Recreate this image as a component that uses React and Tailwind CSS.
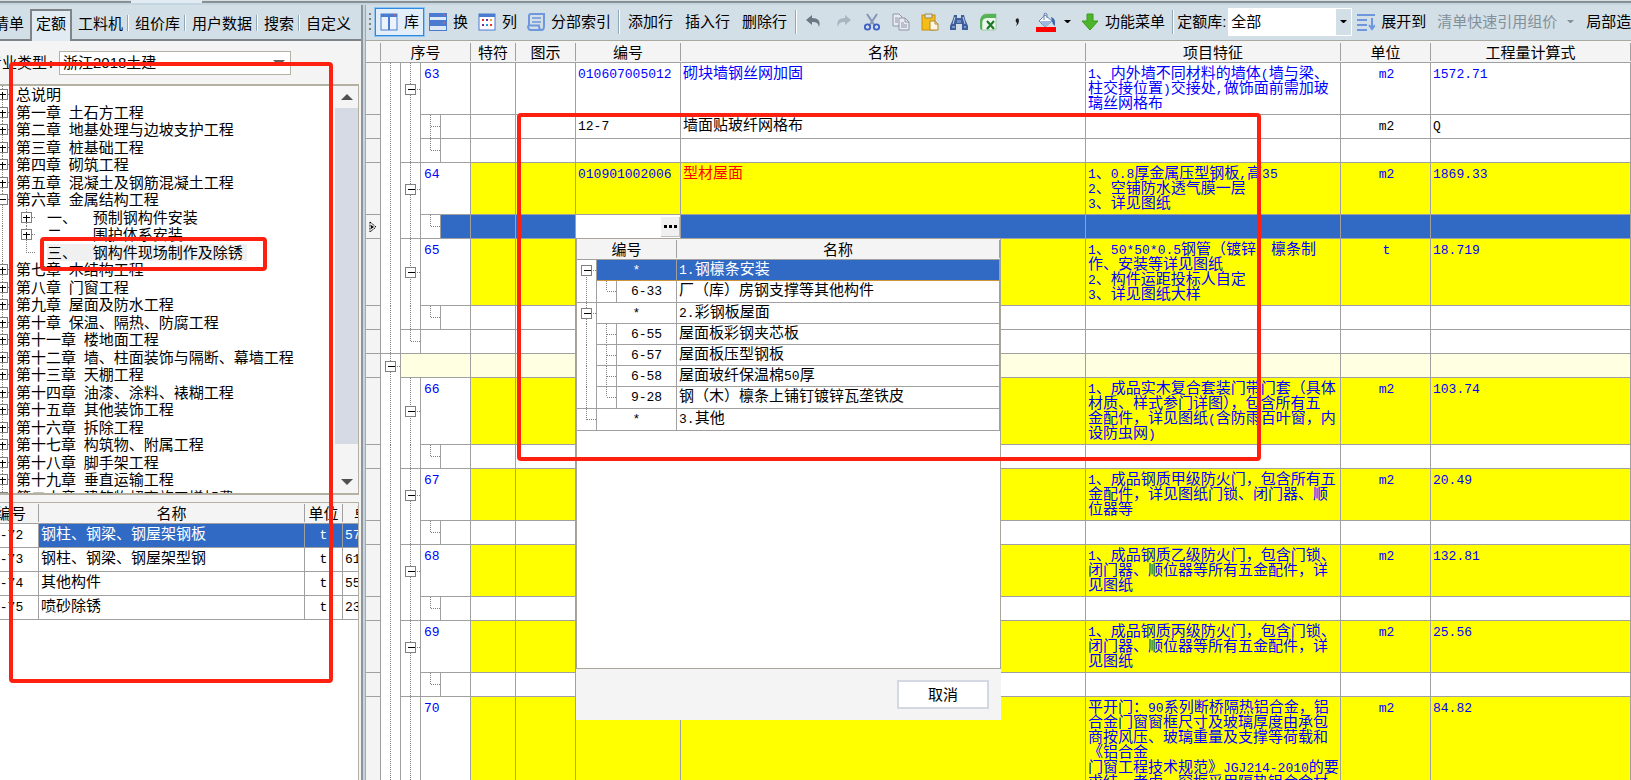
import React, { useState } from "react";
import clsx from "clsx";

const tabs = ["清单", "定额", "工料机", "组价库", "用户数据", "搜索", "自定义"];

const chapters = [
  { text: "总说明" },
  { text: "第一章 土石方工程" },
  { text: "第二章 地基处理与边坡支护工程" },
  { text: "第三章 桩基础工程" },
  { text: "第四章 砌筑工程" },
  { text: "第五章 混凝土及钢筋混凝土工程" },
  { text: "第六章 金属结构工程", open: true },
  { text: "一、  预制钢构件安装", sub: true },
  { text: "二、  围护体系安装", sub: true },
  { text: "三、  钢构件现场制作及除锈", sub: true, leaf: true },
  { text: "第七章 木结构工程" },
  { text: "第八章 门窗工程" },
  { text: "第九章 屋面及防水工程" },
  { text: "第十章 保温、隔热、防腐工程" },
  { text: "第十一章 楼地面工程" },
  { text: "第十二章 墙、柱面装饰与隔断、幕墙工程" },
  { text: "第十三章 天棚工程" },
  { text: "第十四章 油漆、涂料、裱糊工程" },
  { text: "第十五章 其他装饰工程" },
  { text: "第十六章 拆除工程" },
  { text: "第十七章 构筑物、附属工程" },
  { text: "第十八章 脚手架工程" },
  { text: "第十九章 垂直运输工程" },
  { text: "第二十章 建筑物超高施工增加费" },
];

const quotas = [
  { code: "6-72", name: "钢柱、钢梁、钢屋架钢板", unit: "t", price: "57" },
  { code: "6-73", name: "钢柱、钢梁、钢屋架型钢", unit: "t", price: "61" },
  { code: "6-74", name: "其他构件", unit: "t", price: "55" },
  { code: "6-75", name: "喷砂除锈", unit: "t", price: "23" },
];

const rows = [
  { kind: "item", no: "63", size: "md", code: "010607005012", name: "砌块墙钢丝网加固", unit: "m2", qty: "1572.71", plain: true,
    feature: ["1、内外墙不同材料的墙体(墙与梁、", "柱交接位置)交接处,做饰面前需加玻", "璃丝网格布"] },
  { kind: "child", code: "12-7", name: "墙面贴玻纤网格布", unit: "m2", qty: "Q" },
  { kind: "last" },
  { kind: "item", no: "64", size: "md", code: "010901002006", name: "型材屋面", unit: "m2", qty: "1869.33", alert: true,
    feature: ["1、0.8厚金属压型钢板,高35", "2、空铺防水透气膜一层", "3、详见图纸"] },
  { kind: "last", editing: true },
  { kind: "item", no: "65", size: "lg", unit: "t", qty: "18.719",
    feature: ["1、50*50*0.5钢管（镀锌）檩条制", "作、安装等详见图纸", "2、构件运距投标人自定", "3、详见图纸大样"] },
  { kind: "last" },
  { kind: "tail" },
  { kind: "group" },
  { kind: "item", no: "66", size: "lg", unit: "m2", qty: "103.74",
    feature: ["1、成品实木复合套装门带门套（具体", "材质、样式参门详图），包含所有五", "金配件，详见图纸(含防雨百叶窗，内", "设防虫网)"] },
  { kind: "last" },
  { kind: "item", no: "67", size: "md", unit: "m2", qty: "20.49",
    feature: ["1、成品钢质甲级防火门，包含所有五", "金配件，详见图纸门锁、闭门器、顺", "位器等"] },
  { kind: "last" },
  { kind: "item", no: "68", size: "md", unit: "m2", qty: "132.81",
    feature: ["1、成品钢质乙级防火门，包含门锁、", "闭门器、顺位器等所有五金配件，详", "见图纸"] },
  { kind: "last" },
  { kind: "item", no: "69", size: "md", unit: "m2", qty: "25.56",
    feature: ["1、成品钢质丙级防火门，包含门锁、", "闭门器、顺位器等所有五金配件，详", "见图纸"] },
  { kind: "last" },
  { kind: "item", no: "70", size: "xl", unit: "m2", qty: "84.82",
    feature: ["平开门：90系列断桥隔热铝合金，铝", "合金门窗窗框尺寸及玻璃厚度由承包", "商按风压、玻璃重量及支撑等荷载和", "《铝合金", "门窗工程技术规范》JGJ214-2010的要", "求结、考虑，窗框采用隔热铝合金材"] },
];

const suggestions = [
  { code: "*", name: "1.钢檩条安装", glyph: "box" },
  { code: "6-33", name: "厂（库）房钢支撑等其他构件", sub: "end" },
  { code: "*", name: "2.彩钢板屋面", glyph: "box" },
  { code: "6-55", name: "屋面板彩钢夹芯板", sub: "tee" },
  { code: "6-57", name: "屋面板压型钢板", sub: "tee" },
  { code: "6-58", name: "屋面玻纤保温棉50厚", sub: "tee" },
  { code: "9-28", name: "钢（木）檩条上铺钉镀锌瓦垄铁皮", sub: "end" },
  { code: "*", name: "3.其他", glyph: "end" },
];

const sizes = {
  sm: "h-[24px]",
  md: "h-[52px]",
  lg: "h-[67px]",
  xl: "h-[184px]",
};

// half-width characters go in the mono face, the rest stays in the CJK one
const Mixed = ({ children }) =>
  children
    .split(/([\x20-\x7e]+)/)
    .filter(Boolean)
    .map((part, i) =>
      /^[\x20-\x7e]/.test(part) ? (
        <span key={i} className="whitespace-pre font-['Liberation_Mono',monospace] text-[13px] leading-none">{part}</span>
      ) : (
        part
      )
    );

// tree connectors: line | tee | end | box, plus sign when closed
const Glyph = ({ type, closed, first }) => (
  <svg className="block h-full w-full" shapeRendering="crispEdges" aria-hidden="true">
    <line x1="50%" x2="50%" y1={first ? "50%" : "0"} y2={type === "end" ? "50%" : "100%"} stroke="#808080" strokeDasharray="1 1" />
    {type !== "line" && <line x1="50%" x2="100%" y1="50%" y2="50%" stroke="#808080" strokeDasharray="1 1" />}
    {type === "box" && (
      <svg x="50%" y="50%" overflow="visible">
        <rect x="-5" y="-5" width="10" height="10" fill="#fff" stroke="#808080" />
        <path d={closed ? "M-3 0H4M0 -3V4" : "M-3 0H4"} stroke="#000" fill="none" />
      </svg>
    )}
  </svg>
);

const Caret = ({ className }) => (
  <svg viewBox="0 0 8 4" className={className} aria-hidden="true">
    <path d="M0 0h8L4 4z" fill="currentColor" />
  </svg>
);

const icons = {
  library: (
    <>
      <rect x="1" y="1" width="16" height="16" fill="#eaf2fb" stroke="#4a7bd0" />
      <path d="M1 1h16v3H1z" fill="#4a7bd0" />
      <path d="M9 3v14" stroke="#4a7bd0" strokeWidth="2" />
      <path d="M5 2h1M14 2h1" stroke="#f06060" />
    </>
  ),
  swap: (
    <>
      <rect x="0" y="0" width="18" height="18" fill="#4a7bd0" />
      <path d="M1 4h16v3H1zM1 13h16v4H1z" fill="#dce9f5" />
      <path d="M14 2h2M14 10h2" stroke="#f06060" />
    </>
  ),
  columns: (
    <>
      <rect x="1" y="1" width="16" height="16" fill="#fff" stroke="#4a7bd0" />
      <path d="M1 1h16v3H1z" fill="#4a7bd0" />
      <path d="M4 6h2v2H4zM12 11h2v2h-2z" fill="#f03030" />
      <path d="M8 6h2v2H8zM4 11h2v2H4z" fill="#7030a0" />
      <path d="M12 6h2v2h-2z" fill="#f0a030" />
      <path d="M8 11h2v2H8z" fill="#20a0d0" />
    </>
  ),
  scroll: (
    <g fill="none" stroke="#6f97dd" strokeWidth="2">
      <path d="M2 13V3q0-2 2-2h13v12" />
      <path d="M1 12.500h11q0 4.500 2.500 4.500t2.500-4M1 12.500q0 4.500 3 4.500h11" />
      <path d="M5 5h9M5 9h9" strokeWidth="1.500" />
    </g>
  ),
  undo: <path d="M7 2L1 7l6 5V9c5 0 6 1 7 5 2-6-1-9-7-9z" fill="#6c7784" />,
  redo: <path d="M11 2l6 5-6 5V9c-5 0-6 1-7 5-2-6 1-9 7-9z" fill="#a9b5bf" />,
  cut: (
    <g fill="none">
      <path d="M4 1l8 12M14 1L6 13" stroke="#8595b5" strokeWidth="2" />
      <circle cx="4.500" cy="14" r="2.700" stroke="#3c5fc8" strokeWidth="1.800" />
      <circle cx="13.500" cy="14" r="2.700" stroke="#3c5fc8" strokeWidth="1.800" />
    </g>
  ),
  copy: (
    <g fill="#e8ebf2" stroke="#9095a8">
      <path d="M1 1h6l3 3v9H1z" />
      <path d="M7 5h6l4 4v8H7z" />
      <path d="M13 5v4h4M9 10h3M9 12h6M9 14h6M3 5h3M3 7h3M3 9h3" fill="none" />
    </g>
  ),
  paste: (
    <>
      <rect x="1" y="2" width="13" height="15" fill="#f5bd18" stroke="#c8900c" />
      <path d="M4 1h7v4H4z" fill="#dfe3e8" stroke="#9a8a50" />
      <path d="M9 8h5l3 3v6H9z" fill="#fdf6dc" stroke="#b08a30" />
      <path d="M14 8v3h3" fill="none" stroke="#b08a30" />
    </>
  ),
  find: (
    <>
      <path d="M4 2h3v3h4V2h3l1 4 3 7v4h-6v-6H6v6H0v-4l3-7z" fill="#3d5f9c" />
      <path d="M5 4l-2 7M13 4l2 7M2 14h3M14 14h2" stroke="#c5d6ee" />
      <path d="M7 7h4v3H7z" fill="#6f8fc4" />
    </>
  ),
  excel: (
    <>
      <path d="M5 1h12v15q0 1-1 1H3V8z" fill="#eef7ee" stroke="#8cc48c" strokeWidth=".8" />
      <path d="M17 1H8Q1 1 1 9v5q0 3 2 3V10q0-5 6-5h8z" fill="#57b157" />
      <path d="M8 8l7 8M15 8l-7 8" stroke="#1d7a2c" strokeWidth="2.200" />
    </>
  ),
  comma: <path d="M8 6q3-2 3 2 0 3-3 5 1-2 1-3-2-1-1-4z" fill="#222" />,
  down: <path d="M6 1h6v7h5l-8 9-8-9h5z" fill="#4db52a" stroke="#3a9a1c" />,
  expand: (
    <g stroke="#6f97dd" strokeWidth="2" fill="none">
      <path d="M0 2h18M0 7h10M0 12h10M0 17h10M15 5v10" />
      <path d="M12 12l3 4 3-4" />
    </g>
  ),
};

const Icon = ({ name }) => (
  <svg viewBox="0 0 18 18" className="h-[18px] w-[18px] shrink-0" aria-hidden="true">
    {icons[name]}
  </svg>
);

const ToolButton = ({ icon, children, active, muted }) => (
  <button
    className={clsx(
      "flex h-7 shrink-0 items-center gap-[6px] border",
      icon ? "px-1" : "px-[5px]",
      active ? "border-[#2d8ae0] bg-[#e3eef8] outline outline-[#8fc3f2]" : "border-transparent",
      muted && "text-[#82909a]"
    )}
  >
    {icon && <Icon name={icon} />}
    {children}
  </button>
);

const IconButton = ({ icon, label }) => (
  <button aria-label={label} className="flex h-7 w-[29px] shrink-0 items-center justify-center">
    <Icon name={icon} />
  </button>
);

const Divider = () => <span className="mx-[2px] h-6 w-[2px] shrink-0 border-l border-[#8fa9b8] bg-white" />;

const HeadCell = ({ children, colSpan }) => (
  <th colSpan={colSpan} className="border-b border-[#a0a0a0] bg-[#f4f4f4] p-0 font-normal">
    <div className="h-[18px] border-r border-[#a0a0a0] leading-[20px] whitespace-nowrap">{children}</div>
  </th>
);

const Toolbar = () => (
  <div className="flex h-[36px] items-center overflow-hidden border-b border-[#a9a99f] bg-[#d3dfe7] pb-[2px] whitespace-nowrap">
    <svg className="h-5 w-[9px] shrink-0" aria-hidden="true">
      <path d="M4 1v18" stroke="#808080" strokeWidth="2" strokeDasharray="2 3" />
    </svg>
    <ToolButton icon="library" active>库</ToolButton>
    <ToolButton icon="swap">换</ToolButton>
    <ToolButton icon="columns">列</ToolButton>
    <ToolButton icon="scroll">分部索引</ToolButton>
    <Divider />
    <ToolButton>添加行</ToolButton>
    <ToolButton>插入行</ToolButton>
    <ToolButton>删除行</ToolButton>
    <Divider />
    <IconButton icon="undo" label="撤销" />
    <IconButton icon="redo" label="恢复" />
    <IconButton icon="cut" label="剪切" />
    <IconButton icon="copy" label="复制" />
    <IconButton icon="paste" label="粘贴" />
    <IconButton icon="find" label="查找" />
    <IconButton icon="excel" label="导出" />
    <IconButton icon="comma" label="分隔" />
    <button aria-label="填充颜色" className="flex h-7 shrink-0 items-center gap-2 px-[5px]">
      <svg viewBox="0 0 20 20" className="h-5 w-5" aria-hidden="true">
        <path d="M9 3l7 6-7 6-6-6z" fill="#f4f7fb" stroke="#6f87b0" />
        <path d="M8 8V2q1-2 3 0v4" fill="none" stroke="#6f87b0" />
        <path d="M4 9h12l-7 6z" fill="#9db8dc" />
        <path d="M15 5q5 1 4 9-3-2-3-5z" fill="#3c66a8" />
        <path d="M0 15h20v5H0z" fill="#f00" />
      </svg>
      <Caret className="w-[7px]" />
    </button>
    <ToolButton icon="down">功能菜单</ToolButton>
    <Divider />
    <label htmlFor="library" className="shrink-0 pl-px">定额库:</label>
    <div className="relative ml-[2px] shrink-0">
      <select id="library" className="h-7 w-[124px] appearance-none bg-white pl-[3px]">
        <option>全部</option>
      </select>
      <span className="pointer-events-none absolute inset-y-px right-px flex w-[15px] items-center justify-center bg-[#d3dfe7]">
        <Caret className="w-[7px]" />
      </span>
    </div>
    <ToolButton icon="expand">展开到</ToolButton>
    <ToolButton muted>
      清单快速引用组价
      <Caret className="ml-1 w-[7px]" />
    </ToolButton>
    <ToolButton>局部造价</ToolButton>
  </div>
);

const SuggestPopup = () => {
  const [picked, setPicked] = useState(0);

  return (
    <div className="absolute top-[23px] left-0 z-10 w-[425px] bg-[#f4f4f4] text-black">
      <div className="h-[431px] border border-[#a9a59a] bg-white">
        <table className="w-full table-fixed border-separate border-spacing-0">
          <colgroup>
            <col className="w-[20px]" />
            <col className="w-[20px]" />
            <col className="w-[60px]" />
            <col />
          </colgroup>
          <thead>
            <tr className="h-[21px]">
              <HeadCell colSpan={3}>编号</HeadCell>
              <HeadCell>名称</HeadCell>
            </tr>
          </thead>
          <tbody>
            {suggestions.map((s, i) => {
              const cell = clsx(
                "border-r border-b border-[#a0a0a0] p-0 align-top leading-[18px] whitespace-nowrap",
                picked === i && "border-b-[#cf953a] bg-[#316ac5] text-white"
              );
              return (
                <tr key={s.name} onClick={() => setPicked(i)}>
                  <td className={clsx("border-r border-[#a0a0a0] bg-white p-0", (i === 1 || i > 5) && "border-b")}>
                    <div className="h-[21px]"><Glyph type={s.glyph || "line"} first={i === 0} /></div>
                  </td>
                  {s.sub && (
                    <td className="border-r border-b border-[#a0a0a0] bg-white p-0 align-top">
                      <div className="h-[20px]"><Glyph type={s.sub} /></div>
                    </td>
                  )}
                  <td colSpan={s.sub ? 1 : 2} className={clsx(cell, "text-center")}><Mixed>{s.code}</Mixed></td>
                  <td className={clsx(cell, "pl-[2px]")}><Mixed>{s.name}</Mixed></td>
                </tr>
              );
            })}
          </tbody>
        </table>
      </div>
      <div className="flex h-[51px] items-center justify-end pr-3">
        <button className="h-[29px] w-[92px] border-2 border-[#d3d8e2] bg-white">取消</button>
      </div>
    </div>
  );
};

const SeqCell = ({ row }) => {
  const line = "border-b border-[#a0a0a0]";

  return (
    <td className="p-0">
      <div className={clsx("flex border-r border-[#a0a0a0]", sizes[row.size || "sm"])}>
        <div className={clsx("w-[20px] border-r border-[#a0a0a0]", row.kind === "tail" && "border-b")}>
          <Glyph type={row.kind === "group" ? "box" : "line"} />
        </div>
        {row.kind === "group" ? (
          <div className={clsx("flex-1 bg-[#ffffe1]", line)} />
        ) : (
          <>
            <div className={clsx("w-[20px] border-r border-[#a0a0a0]", (row.kind === "last" || row.kind === "tail") && "border-b")}>
              <Glyph type={row.kind === "item" ? "box" : row.kind === "tail" ? "end" : "line"} />
            </div>
            {(row.kind === "child" || row.kind === "last") && (
              <div className={clsx("w-[20px] border-r", line)}>
                <Glyph type={row.kind === "child" ? "tee" : "end"} />
              </div>
            )}
            <div className={clsx("flex-1 pt-[2px] pl-[3px] leading-[15px]", line, row.editing && "bg-[#316ac5]")}>
              {row.no && <Mixed>{row.no}</Mixed>}
            </div>
          </>
        )}
      </div>
    </td>
  );
};

const BillRow = ({ row }) => {
  const isItem = row.kind === "item";
  const cell = clsx(
    "border-r border-b border-[#a0a0a0] p-0 pt-[2px] pl-[2px] align-top leading-[15px] whitespace-nowrap",
    isItem && !row.plain && "bg-[#ffff00]",
    row.kind === "group" && "bg-[#ffffe1]",
    row.editing && "bg-[#316ac5]"
  );

  return (
    <tr className={clsx(isItem && "text-[#0000ff]")}>
      <td className="border-r border-b border-[#a0a0a0] bg-[#f4f4f4] p-0">
        {row.editing && (
          <svg viewBox="0 0 8 12" className="mx-auto h-3 w-2" aria-hidden="true">
            <path d="M1 1l6 5-6 5z" fill="none" stroke="#000" strokeDasharray="2 1" />
            <path d="M2 4l3 2-3 2z" />
          </svg>
        )}
      </td>
      <SeqCell row={row} />
      <td className={cell} />
      <td className={cell} />
      {row.editing ? (
        <td className="relative border-r border-[#a0a0a0] bg-white p-0">
          <div className="flex h-[23px] items-center">
            <input aria-label="编号" className="min-w-0 flex-1 pl-[2px] outline-none" />
            <button aria-label="选择" className="flex h-5 w-[19px] items-center justify-center gap-[2px] border-r border-b border-[#c0c0c0] bg-[#f0f0f0]">
              <i className="h-[3px] w-[3px] bg-black" />
              <i className="h-[3px] w-[3px] bg-black" />
              <i className="h-[3px] w-[3px] bg-black" />
            </button>
          </div>
          <SuggestPopup />
        </td>
      ) : (
        <td className={cell}>{row.code && <Mixed>{row.code}</Mixed>}</td>
      )}
      <td className={clsx(cell, row.alert && "text-[#ff0000]")}>{row.name}</td>
      <td className={cell}>
        {row.feature && row.feature.map((t) => <div key={t} className="h-[15px]"><Mixed>{t}</Mixed></div>)}
      </td>
      <td className={clsx(cell, "text-center")}>{row.unit && <Mixed>{row.unit}</Mixed>}</td>
      <td className={cell}>{row.qty && <Mixed>{row.qty}</Mixed>}</td>
    </tr>
  );
};

const BillTable = () => (
  <table className="w-full table-fixed border-separate border-spacing-0">
    <colgroup>
      <col className="w-[15px]" />
      <col className="w-[90px]" />
      <col className="w-[45px]" />
      <col className="w-[60px]" />
      <col className="w-[105px]" />
      <col className="w-[405px]" />
      <col className="w-[255px]" />
      <col className="w-[90px]" />
      <col />
    </colgroup>
    <thead>
      <tr className="h-[22px]">
        {["", "序号", "特符", "图示", "编号", "名称", "项目特征", "单位", "工程量计算式"].map((h) => (
          <HeadCell key={h}>{h}</HeadCell>
        ))}
      </tr>
    </thead>
    <tbody>
      {rows.map((row, i) => (
        <BillRow key={i} row={row} />
      ))}
    </tbody>
  </table>
);

const Sidebar = () => {
  const [tab, setTab] = useState("定额");
  const [selected, setSelected] = useState(0);

  return (
    <aside className="flex w-[363px] shrink-0 overflow-hidden border-r-2 border-[#8f9499] bg-[#f4f4f4]">
      <div className="-ml-4 flex min-w-0 flex-1 flex-col">
        <div className="flex h-[36px] shrink-0 items-end border-b-2 border-[#7f8488] bg-[#d3dfe7] pl-1 whitespace-nowrap">
          {tabs.map((t, i) => (
            <button
              key={t}
              onClick={() => setTab(t)}
              className={clsx(
                "relative shrink-0",
                tab === t ? "-mb-[2px] h-[32px] border-x-2 border-t-2 border-[#7f8488] bg-[#e0ebf4] px-1 pb-1" : "h-[30px] px-[6px]"
              )}
            >
              {t}
              {i > 1 && i < 6 && <span className="absolute top-[6px] right-0 h-4 w-[2px] border-l border-[#8fa9b8] bg-white" />}
            </button>
          ))}
        </div>

        <div className="flex h-[43px] shrink-0 items-center pl-[3px]">
          <label htmlFor="specialty" className="w-[72px] whitespace-nowrap"><Mixed>专业类型:</Mixed></label>
          <div className="relative w-[232px]">
            <select id="specialty" className="h-6 w-full appearance-none border border-[#b5b1a2] bg-white pl-[3px]">
              <option>浙江2018土建</option>
            </select>
            <Caret className="pointer-events-none absolute top-[9px] right-[6px] w-3 text-[#606060]" />
          </div>
        </div>

        <div className="mr-[2px] flex h-[411px] shrink-0 overflow-hidden border-y-2 border-r border-[#b5b1a2] bg-white">
          <ul className="grid h-[420px] min-w-0 flex-1 auto-rows-fr pl-[9px] leading-[17px] whitespace-nowrap">
            {chapters.map((c) => (
              <li key={c.text} className="flex min-h-0">
                <div className="w-[18px] shrink-0">
                  <Glyph type={c.sub ? "line" : "box"} closed={!c.open} />
                </div>
                {c.sub && (
                  <div className="ml-[5px] w-[20px] shrink-0">
                    <Glyph type={c.leaf ? "end" : "box"} closed />
                  </div>
                )}
                <span className={clsx("pr-1", c.sub ? "ml-[11px]" : "ml-[5px]", c.leaf && "bg-[#f0f0f0]")}>
                  <Mixed>{c.text}</Mixed>
                </span>
              </li>
            ))}
          </ul>
          <div className="flex w-[23px] shrink-0 flex-col items-center bg-[#f4f4f4]">
            <span className="flex h-[22px] items-center"><Caret className="w-3 rotate-180 text-[#505050]" /></span>
            <span className="h-[336px] w-full bg-[#d6dae4]" />
            <span className="mt-auto flex h-[22px] items-center"><Caret className="w-3 text-[#505050]" /></span>
          </div>
        </div>

        <div className="mt-[7px] mr-[2px] min-h-0 flex-1 overflow-hidden border-t border-r border-[#b5b1a2] bg-white">
          <table className="w-[397px] table-fixed border-separate border-spacing-0">
            <colgroup>
              <col className="w-[55px]" />
              <col className="w-[266px]" />
              <col className="w-[38px]" />
              <col />
            </colgroup>
            <thead>
              <tr className="h-[21px]">
                <HeadCell>编号</HeadCell>
                <HeadCell>名称</HeadCell>
                <HeadCell>单位</HeadCell>
                <HeadCell>单</HeadCell>
              </tr>
            </thead>
            <tbody>
              {quotas.map((q, i) => {
                const base = "border-r border-b border-[#a0a0a0] p-0 align-top";
                const cell = clsx(base, i === selected && "bg-[#316ac5] text-white");
                return (
                  <tr key={q.code} className="h-6 leading-[20px]" onClick={() => setSelected(i)}>
                    <td className={clsx(base, "pl-2")}><Mixed>{q.code}</Mixed></td>
                    <td className={clsx(cell, "pl-[2px]")}>{q.name}</td>
                    <td className={clsx(cell, "text-center")}><Mixed>{q.unit}</Mixed></td>
                    <td className={clsx(cell, "pl-[2px]")}><Mixed>{q.price}</Mixed></td>
                  </tr>
                );
              })}
            </tbody>
          </table>
        </div>
      </div>
    </aside>
  );
};

const Mark = ({ className }) => (
  <div className={clsx("pointer-events-none absolute z-20 rounded-[4px] border-4 border-[#ff2010]", className)} />
);

const App = () => {
  return (
    <div className="relative flex h-screen flex-col overflow-hidden bg-[#c5d6e0] font-['Liberation_Sans','Noto_Sans_CJK_SC',sans-serif] text-[15px] leading-[20px] text-black">
      <div className="flex h-[3px] shrink-0">
        <div className="w-[131px] border-b-2 border-[#8a8f92] bg-[#d3dfe7]" />
        <div className="w-[71px] bg-[#e0ebf4]" />
        <div className="flex-1 border-b-2 border-[#8a8f92] bg-[#d3dfe7]" />
      </div>
      <div className="flex min-h-0 flex-1 pt-[2px]">
        <Sidebar />
        <main className="ml-[2px] min-w-0 flex-1 overflow-hidden border-l border-[#a9a99f] bg-white">
          <Toolbar />
          <BillTable />
        </main>
      </div>

      <Mark className="top-[62px] left-[9px] h-[621px] w-[324px]" />
      <Mark className="top-[237px] left-[40px] h-[34px] w-[227px]" />
      <Mark className="top-[113px] left-[517px] h-[348px] w-[744px]" />
    </div>
  );
};

export default App;
